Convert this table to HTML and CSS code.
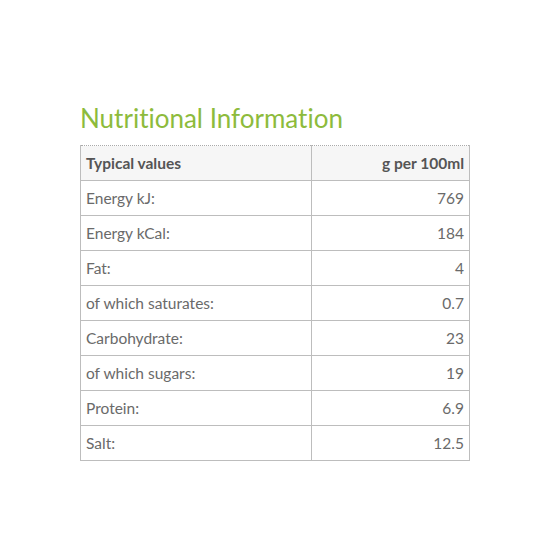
FILE: index.html
```html
<!DOCTYPE html>
<html lang="en">

<head>
  <meta charset="UTF-8">
  <meta name="viewport" content="width=device-width, initial-scale=1.0">
  <title>Nutritional Information</title>
  <link rel="stylesheet" href="styles.css">
</head>

<body>
  <div class="container">
    <h1 class="title">Nutritional Information</h1>
    <table class="nutrition">
      <thead>
        <tr>
          <th>Typical values</th>
          <th class="num">g per 100ml</th>
        </tr>
      </thead>
      <tbody>
        <tr><td>Energy kJ:</td><td class="num">769</td></tr>
        <tr><td>Energy kCal:</td><td class="num">184</td></tr>
        <tr><td>Fat:</td><td class="num">4</td></tr>
        <tr><td>of which saturates:</td><td class="num">0.7</td></tr>
        <tr><td>Carbohydrate:</td><td class="num">23</td></tr>
        <tr><td>of which sugars:</td><td class="num">19</td></tr>
        <tr><td>Protein:</td><td class="num">6.9</td></tr>
        <tr><td>Salt:</td><td class="num">12.5</td></tr>
      </tbody>
    </table>
  </div>
</body>

</html>
```

FILE: styles.css
```css
body {
  margin: 0;
  font-family: Lato, "Open Sans", sans-serif;
  font-variant-ligatures: none;
  background-color: #fff;
  color: #6a6a6a;
}

.container {
  width: 390px;
  padding: 101px 0 0 80px;
}

.title {
  margin: 0 0 10px;
  font-size: 26px;
  font-weight: normal;
  color: #8dbb3c;
  line-height: 34px;
}

.nutrition {
  width: 390px;
  border-collapse: collapse;
  font-size: 15.5px;
}

.nutrition th,
.nutrition td {
  height: 34px;
  padding: 0 5px;
  border: 1px solid #bdbdbd;
  text-align: left;
}

.nutrition th {
  background-color: #f6f6f6;
  color: #555;
  font-weight: bold;
  border-top: 1px dotted #aaa;
}

.nutrition th:first-child,
.nutrition td:first-child {
  width: 220px;
}

.nutrition .num {
  text-align: right;
}
```
